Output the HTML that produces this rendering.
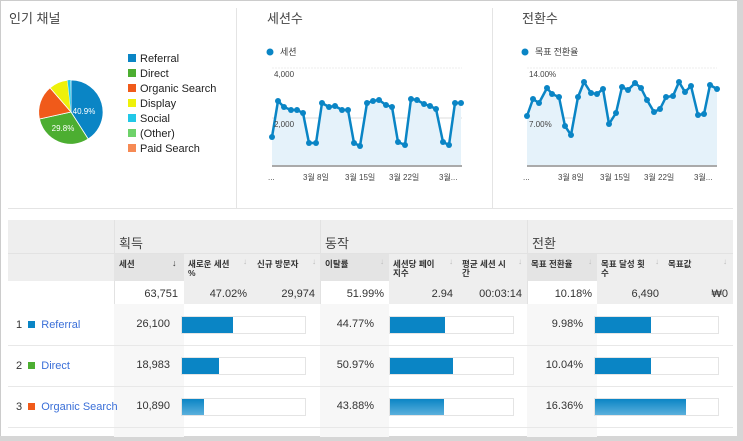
<!DOCTYPE html>
<html><head><meta charset="utf-8"><style>
*{margin:0;padding:0;box-sizing:border-box}
body{width:743px;height:441px;overflow:hidden;background:#fff;font-family:"Liberation Sans","Noto Sans CJK KR",sans-serif;position:relative;color:#333}
.a{position:absolute}
.t{font-size:13px;color:#444}
.lg{font-size:11px;color:#222;line-height:15px}
.lg i{display:inline-block;width:8px;height:8px;margin-right:4px;vertical-align:-0px}
.h2{font-size:8.5px;font-weight:bold;color:#333;line-height:9px}
.ar{font-size:8px;color:#bbb}
.num{font-size:11px;color:#333;text-align:right}
.bar{position:absolute;height:26px;border:1px solid #e4e4e4;background:#fff}
.bar b{position:absolute;left:0;top:0;bottom:0;background:#0a85c5}
.lnk{color:#3a6fd8;font-size:11px}
</style></head><body>
<div class="a" style="left:0;top:0;width:743px;height:1px;background:#ccc"></div>
<div class="a" style="left:0;top:0;width:1px;height:441px;background:#ccc"></div>
<div class="a" style="left:737px;top:0;width:6px;height:441px;background:#d6d6d6"></div>
<div class="a" style="left:0;top:436px;width:743px;height:5px;background:#d6d6d6"></div>
<div class="a" style="left:236px;top:8px;width:1px;height:200px;background:#e4e4e4"></div>
<div class="a" style="left:492px;top:8px;width:1px;height:200px;background:#e4e4e4"></div>
<div class="a" style="left:8px;top:208px;width:725px;height:1px;background:#e4e4e4"></div>

<div class="a t" style="left:9px;top:8px">인기 채널</div>
<div class="a t" style="left:267px;top:8px">세션수</div>
<div class="a t" style="left:522px;top:8px">전환수</div>

<svg class="a" style="left:0;top:0" width="743" height="200">
<g transform="translate(71,112)">
<path d="M0,0 L0,-32 A32,32 0 0 1 17.2,27 Z" fill="#0a85c5" stroke="#fff" stroke-width="0.8"/>
<path d="M0,0 L17.2,27 A32,32 0 0 1 -31.6,7 Z" fill="#4cae31" stroke="#fff" stroke-width="0.8"/>
<path d="M0,0 L-31.6,7 A32,32 0 0 1 -21,-24.2 Z" fill="#f05a1a" stroke="#fff" stroke-width="0.8"/>
<path d="M0,0 L-21,-24.2 A32,32 0 0 1 -3.5,-31.8 Z" fill="#eef10a" stroke="#fff" stroke-width="0.8"/>
<path d="M0,0 L-3.5,-31.8 A32,32 0 0 1 -0.5,-32 Z" fill="#22c8e8"/>
<text x="13" y="2" font-size="8" fill="#fff" font-family="Liberation Sans" text-anchor="middle">40.9%</text>
<text x="-8" y="19" font-size="8" fill="#fff" font-family="Liberation Sans" text-anchor="middle">29.8%</text>
</g>
<g font-family="Liberation Sans" font-size="8" fill="#444">
<line x1="272" y1="68" x2="462" y2="68" stroke="#eee" stroke-dasharray="2,1"/>
<line x1="272" y1="118" x2="462" y2="118" stroke="#ddd"/>
<path d="M272,137 278,101 284,107 291,110 297,110 303,113 309,143 316,143 322,103 329,107 335,106 342,110 348,110 354,143 360,146 367,103 373,101 379,100 386,105 392,107 398,142 405,145 411,99 417,100 424,104 430,106 436,109 443,142 449,145 455,103 461,103 L461,166 L272,166Z" fill="#e5f2fa"/>
<polyline points="272,137 278,101 284,107 291,110 297,110 303,113 309,143 316,143 322,103 329,107 335,106 342,110 348,110 354,143 360,146 367,103 373,101 379,100 386,105 392,107 398,142 405,145 411,99 417,100 424,104 430,106 436,109 443,142 449,145 455,103 461,103" fill="none" stroke="#0a85c5" stroke-width="2.5" stroke-linejoin="round"/>
<g fill="#0a85c5"><circle cx="272" cy="137" r="3"/><circle cx="278" cy="101" r="3"/><circle cx="284" cy="107" r="3"/><circle cx="291" cy="110" r="3"/><circle cx="297" cy="110" r="3"/><circle cx="303" cy="113" r="3"/><circle cx="309" cy="143" r="3"/><circle cx="316" cy="143" r="3"/><circle cx="322" cy="103" r="3"/><circle cx="329" cy="107" r="3"/><circle cx="335" cy="106" r="3"/><circle cx="342" cy="110" r="3"/><circle cx="348" cy="110" r="3"/><circle cx="354" cy="143" r="3"/><circle cx="360" cy="146" r="3"/><circle cx="367" cy="103" r="3"/><circle cx="373" cy="101" r="3"/><circle cx="379" cy="100" r="3"/><circle cx="386" cy="105" r="3"/><circle cx="392" cy="107" r="3"/><circle cx="398" cy="142" r="3"/><circle cx="405" cy="145" r="3"/><circle cx="411" cy="99" r="3"/><circle cx="417" cy="100" r="3"/><circle cx="424" cy="104" r="3"/><circle cx="430" cy="106" r="3"/><circle cx="436" cy="109" r="3"/><circle cx="443" cy="142" r="3"/><circle cx="449" cy="145" r="3"/><circle cx="455" cy="103" r="3"/><circle cx="461" cy="103" r="3"/></g>
<rect x="272" y="165" width="190" height="2" fill="#aaa"/>
<circle cx="270" cy="52" r="3.5" fill="#0a85c5"/><text x="280" y="55" font-family="Noto Sans CJK KR" font-size="9">세션</text>
<text x="274" y="77">4,000</text><text x="274" y="127">2,000</text>
<text x="268" y="180">...</text><text x="303" y="180">3월 8일</text><text x="345" y="180">3월 15일</text><text x="389" y="180">3월 22일</text><text x="439" y="180">3월...</text>

<line x1="527" y1="68" x2="717" y2="68" stroke="#eee" stroke-dasharray="2,1"/>
<line x1="527" y1="118" x2="717" y2="118" stroke="#ddd"/>
<path d="M527,116 533,99 539,103 547,88 552,94 559,97 565,126 571,135 578,97 584,82 591,93 597,94 603,89 609,124 616,113 622,87 628,90 635,83 641,88 647,100 654,112 660,109 666,97 673,96 679,82 685,92 691,86 698,115 704,114 710,85 717,89 L717,166 L527,166Z" fill="#e5f2fa"/>
<polyline points="527,116 533,99 539,103 547,88 552,94 559,97 565,126 571,135 578,97 584,82 591,93 597,94 603,89 609,124 616,113 622,87 628,90 635,83 641,88 647,100 654,112 660,109 666,97 673,96 679,82 685,92 691,86 698,115 704,114 710,85 717,89" fill="none" stroke="#0a85c5" stroke-width="2.5" stroke-linejoin="round"/>
<g fill="#0a85c5"><circle cx="527" cy="116" r="3"/><circle cx="533" cy="99" r="3"/><circle cx="539" cy="103" r="3"/><circle cx="547" cy="88" r="3"/><circle cx="552" cy="94" r="3"/><circle cx="559" cy="97" r="3"/><circle cx="565" cy="126" r="3"/><circle cx="571" cy="135" r="3"/><circle cx="578" cy="97" r="3"/><circle cx="584" cy="82" r="3"/><circle cx="591" cy="93" r="3"/><circle cx="597" cy="94" r="3"/><circle cx="603" cy="89" r="3"/><circle cx="609" cy="124" r="3"/><circle cx="616" cy="113" r="3"/><circle cx="622" cy="87" r="3"/><circle cx="628" cy="90" r="3"/><circle cx="635" cy="83" r="3"/><circle cx="641" cy="88" r="3"/><circle cx="647" cy="100" r="3"/><circle cx="654" cy="112" r="3"/><circle cx="660" cy="109" r="3"/><circle cx="666" cy="97" r="3"/><circle cx="673" cy="96" r="3"/><circle cx="679" cy="82" r="3"/><circle cx="685" cy="92" r="3"/><circle cx="691" cy="86" r="3"/><circle cx="698" cy="115" r="3"/><circle cx="704" cy="114" r="3"/><circle cx="710" cy="85" r="3"/><circle cx="717" cy="89" r="3"/></g>
<rect x="527" y="165" width="190" height="2" fill="#aaa"/>
<circle cx="525" cy="52" r="3.5" fill="#0a85c5"/><text x="535" y="55" font-family="Noto Sans CJK KR" font-size="9">목표 전환율</text>
<text x="529" y="77">14.00%</text><text x="529" y="127">7.00%</text>
<text x="523" y="180">...</text><text x="558" y="180">3월 8일</text><text x="600" y="180">3월 15일</text><text x="644" y="180">3월 22일</text><text x="694" y="180">3월...</text>
</g>
</svg>

<div class="a lg" style="left:128px;top:52px">
<div><i style="background:#0a85c5"></i>Referral</div>
<div><i style="background:#4cae31"></i>Direct</div>
<div><i style="background:#f05a1a"></i>Organic Search</div>
<div><i style="background:#eef10a"></i>Display</div>
<div><i style="background:#22c8e8"></i>Social</div>
<div><i style="background:#6ed26a"></i>(Other)</div>
<div><i style="background:#f68a54"></i>Paid Search</div>
</div>

<div class="a" style="left:8px;top:220px;width:725px;height:61px;background:#eeeeee"></div>
<div class="a" style="left:8px;top:253px;width:725px;height:1px;background:#e2e2e2"></div>
<div class="a" style="left:114px;top:220px;width:1px;height:217px;background:#e2e2e2"></div>
<div class="a" style="left:320px;top:220px;width:1px;height:217px;background:#e2e2e2"></div>
<div class="a" style="left:527px;top:220px;width:1px;height:217px;background:#e2e2e2"></div>
<div class="a" style="left:114px;top:254px;width:70px;height:27px;background:#e4e4e4"></div>
<div class="a" style="left:320px;top:254px;width:69px;height:27px;background:#e4e4e4"></div>
<div class="a" style="left:527px;top:254px;width:70px;height:27px;background:#e4e4e4"></div>
<div class="a" style="left:184px;top:281px;width:136px;height:23px;background:#eeeeee"></div>
<div class="a" style="left:389px;top:281px;width:138px;height:23px;background:#eeeeee"></div>
<div class="a" style="left:597px;top:281px;width:136px;height:23px;background:#eeeeee"></div>
<div class="a" style="left:114px;top:304px;width:70px;height:133px;background:#f7f7f7"></div>
<div class="a" style="left:320px;top:304px;width:69px;height:133px;background:#f7f7f7"></div>
<div class="a" style="left:527px;top:304px;width:70px;height:133px;background:#f7f7f7"></div>
<div class="a" style="left:8px;top:345px;width:725px;height:1px;background:#e8e8e8"></div>
<div class="a" style="left:8px;top:386px;width:725px;height:1px;background:#e8e8e8"></div>
<div class="a" style="left:8px;top:427px;width:725px;height:1px;background:#e8e8e8"></div>

<div class="a t" style="left:119px;top:233px">획득</div>
<div class="a t" style="left:325px;top:233px">동작</div>
<div class="a t" style="left:532px;top:233px">전환</div>

<div class="a h2" style="left:119px;top:260px">세션</div><div class="a" style="left:172px;top:258px;font-size:9px;font-weight:bold">↓</div>
<div class="a h2" style="left:188px;top:260px;width:44px">새로운 세션 %</div><div class="a ar" style="left:243px;top:257px">↓</div>
<div class="a h2" style="left:257px;top:260px">신규 방문자</div><div class="a ar" style="left:312px;top:257px">↓</div>
<div class="a h2" style="left:325px;top:260px">이탈률</div><div class="a ar" style="left:380px;top:257px">↓</div>
<div class="a h2" style="left:393px;top:260px;width:44px">세션당 페이지수</div><div class="a ar" style="left:449px;top:257px">↓</div>
<div class="a h2" style="left:462px;top:260px;width:44px">평균 세션 시간</div><div class="a ar" style="left:518px;top:257px">↓</div>
<div class="a h2" style="left:531px;top:260px">목표 전환율</div><div class="a ar" style="left:588px;top:257px">↓</div>
<div class="a h2" style="left:601px;top:260px;width:44px">목표 달성 횟수</div><div class="a ar" style="left:655px;top:257px">↓</div>
<div class="a h2" style="left:668px;top:260px">목표값</div><div class="a ar" style="left:723px;top:257px">↓</div>

<div class="a num" style="left:114px;top:288px;width:64px">63,751</div>
<div class="a num" style="left:184px;top:288px;width:63px">47.02%</div>
<div class="a num" style="left:252px;top:288px;width:63px">29,974</div>
<div class="a num" style="left:320px;top:288px;width:64px">51.99%</div>
<div class="a num" style="left:389px;top:288px;width:64px">2.94</div>
<div class="a num" style="left:458px;top:288px;width:64px">00:03:14</div>
<div class="a num" style="left:527px;top:288px;width:65px">10.18%</div>
<div class="a num" style="left:597px;top:288px;width:62px">6,490</div>
<div class="a num" style="left:664px;top:288px;width:64px">₩0</div>

<div class="a" style="left:16px;top:319px;font-size:11px">1 <i style="display:inline-block;width:7px;height:7px;background:#0a85c5;margin:0 3px"></i> <span class="lnk">Referral</span></div>
<div class="a" style="left:16px;top:360px;font-size:11px">2 <i style="display:inline-block;width:7px;height:7px;background:#4cae31;margin:0 3px"></i> <span class="lnk">Direct</span></div>
<div class="a" style="left:16px;top:401px;font-size:11px">3 <i style="display:inline-block;width:7px;height:7px;background:#f05a1a;margin:0 3px"></i> <span class="lnk">Organic Search</span></div>

<div class="a num" style="left:114px;top:318px;width:56px">26,100</div>
<div class="a num" style="left:114px;top:359px;width:56px">18,983</div>
<div class="a num" style="left:114px;top:400px;width:56px">10,890</div>
<div class="a num" style="left:320px;top:318px;width:54px">44.77%</div>
<div class="a num" style="left:320px;top:359px;width:54px">50.97%</div>
<div class="a num" style="left:320px;top:400px;width:54px">43.88%</div>
<div class="a num" style="left:527px;top:318px;width:56px">9.98%</div>
<div class="a num" style="left:527px;top:359px;width:56px">10.04%</div>
<div class="a num" style="left:527px;top:400px;width:56px">16.36%</div>

<div class="bar" style="left:181px;top:316px;width:125px;height:18px"><b style="width:51px"></b></div>
<div class="bar" style="left:181px;top:357px;width:125px;height:18px"><b style="width:37px"></b></div>
<div class="bar" style="left:181px;top:398px;width:125px;height:18px"><b style="width:22px;background:linear-gradient(#0a85c5,#5ab0dc)"></b></div>
<div class="bar" style="left:389px;top:316px;width:125px;height:18px"><b style="width:55px"></b></div>
<div class="bar" style="left:389px;top:357px;width:125px;height:18px"><b style="width:63px"></b></div>
<div class="bar" style="left:389px;top:398px;width:125px;height:18px"><b style="width:54px;background:linear-gradient(#0a85c5,#5ab0dc)"></b></div>
<div class="bar" style="left:594px;top:316px;width:125px;height:18px"><b style="width:56px"></b></div>
<div class="bar" style="left:594px;top:357px;width:125px;height:18px"><b style="width:56px"></b></div>
<div class="bar" style="left:594px;top:398px;width:125px;height:18px"><b style="width:91px;background:linear-gradient(#0a85c5,#5ab0dc)"></b></div>
</body></html>
